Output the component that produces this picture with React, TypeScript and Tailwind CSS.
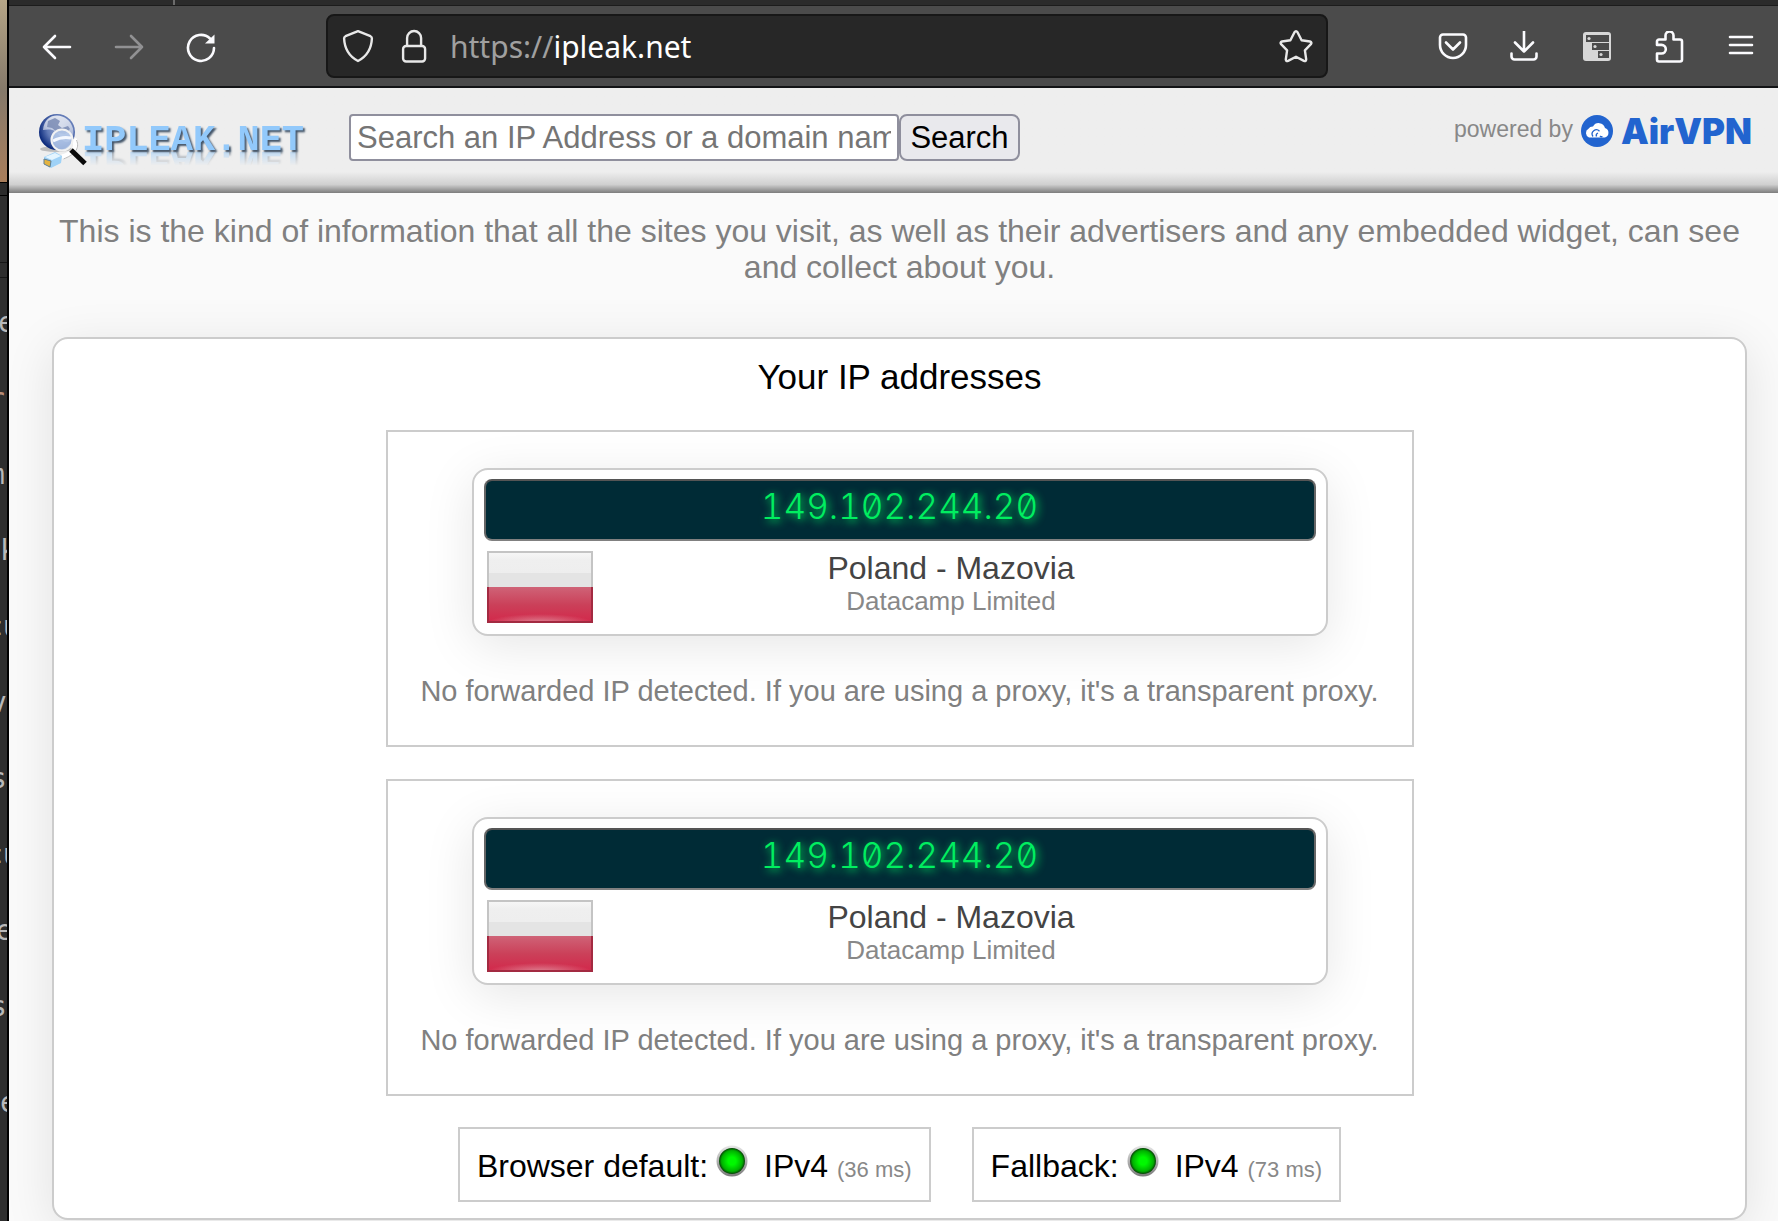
import React from "react";

const GLIMPSES = [
  { text: "e", place: "-ml-0.5" },
  { text: "r", place: "-ml-3 text-[#b98d78]" },
  { text: "m", place: "-ml-3" },
  { text: "k", place: "ml-0" },
  { text: "cu", place: "-ml-3.5" },
  { text: "v", place: "-ml-2.5" },
  { text: "s", place: "-ml-2.5" },
  { text: "cu", place: "-ml-3.5" },
  { text: "e", place: "-ml-1" },
  { text: "s", place: "-ml-2.5" },
  { text: "e", place: "mt-5 ml-0" },
];

function DesktopEdge() {
  return (
    <div className="w-[9px] shrink-0 overflow-hidden border-r-2 border-black bg-[#2e2e2e] font-['DejaVu_Sans_Mono',monospace] text-[28px] leading-[76px] text-[#b9b9b9]">
      <div className="h-[182px] bg-linear-to-b from-[#b5a586] via-[#85796a] to-[#a97e5b]" />
      <div className="h-[14px] border-y border-black bg-[#2b2b2b]" />
      <div className="mt-[66px] h-4 border-y border-[#161616]" />
      <div className="mt-[7px]" aria-hidden="true">
        {GLIMPSES.map((g, i) => (
          <div key={i} className={g.place}>{g.text}</div>
        ))}
      </div>
    </div>
  );
}

const toolIcon = "h-8 w-8 fill-none stroke-[#fbfbfe] stroke-2";

function Toolbar() {
  return (
    <div>
      <div className="flex h-[6px] border-b border-[#1c1c1c] bg-[#2b2b2b]">
        <div className="ml-[164px] w-[2px] bg-[#6b6b6b]" />
      </div>
      <nav className="flex h-[82px] items-center border-b-2 border-[#131416] bg-[#4b4b4b] pr-[21px] pl-8">
        <div className="mt-0.5 flex gap-10">
          <button aria-label="Back">
            <svg viewBox="0 0 32 32" className={toolIcon} strokeLinecap="round" strokeLinejoin="round">
              <path d="M29 16H3M14 5L3 16l11 11" style={{ strokeWidth: 2.6 }} />
            </svg>
          </button>
          <button aria-label="Forward" disabled className="opacity-40">
            <svg viewBox="0 0 32 32" className={toolIcon} strokeLinecap="round" strokeLinejoin="round">
              <path d="M3 16h26M18 5l11 11-11 11" strokeWidth="2.6" />
            </svg>
          </button>
          <button aria-label="Reload">
            <svg viewBox="0 0 32 32" className={toolIcon} strokeLinecap="round">
              <path d="M29 17a13 13 0 1 1-4-9.500" strokeWidth="2.6" />
              <path d="M29.500 3.500v9h-9.500z" className="fill-[#fbfbfe] stroke-none" />
            </svg>
          </button>
        </div>
        <div className="ml-[109px] flex h-16 w-[1002px] min-w-0 items-center rounded-lg border-2 border-[#171717] bg-[#272727] px-[13px]">
          <button aria-label="Tracking protection">
            <svg viewBox="0 0 34 34" className="h-[34px] w-[34px] fill-none stroke-[#e8e8e8]" strokeWidth="2.400" strokeLinejoin="round">
              <path d="M17 2.200L29.500 7.200c1 .5 1.500 1 1.400 2.300C30.500 19 26.500 27 17 32 7.500 27 3.500 19 3.100 9.500 3 8.200 3.500 7.700 4.500 7.200z" />
            </svg>
          </button>
          <button aria-label="Site information" className="ml-[22px]">
            <svg viewBox="0 0 34 34" className="h-[34px] w-[34px] fill-none stroke-[#e8e8e8]" strokeWidth="2.400">
              <rect x="6.100" y="17" width="22" height="15.500" rx="3" />
              <path d="M10.100 17V9a7 7 0 0 1 14 0v8" />
            </svg>
          </button>
          <label className="mt-0.5 ml-[19px] flex grow font-['Noto_Sans',sans-serif] text-[30px] leading-9 text-white">
            <span className="text-[#a0a0a0]">https://</span>
            <input type="text" aria-label="Address" defaultValue="ipleak.net" className="min-w-0 grow bg-transparent outline-none" />
          </label>
          <button aria-label="Bookmark this page">
            <svg viewBox="0 0 34 34" className="h-[34px] w-[34px] fill-none stroke-[#e8e8e8]" strokeWidth="2.400" strokeLinejoin="round">
              <path d="M15.500 3.200q1.500-2.200 3 0l4.100 8 8.400 1.300q2.300.7.900 2.700l-6 6.200 1.300 9q-.2 2.200-2.300 1.500L17 27.800l-7.900 4.100q-2.100.7-2.300-1.500l1.300-9-6-6.200q-1.400-2 .9-2.700l8.400-1.300z" />
            </svg>
          </button>
        </div>
        <div className="mt-0.5 ml-auto flex gap-10">
          <button aria-label="Save to Pocket">
            <svg viewBox="0 0 32 32" className={toolIcon} strokeLinecap="round" strokeLinejoin="round">
              <path strokeWidth="2.6" d="M6 3.500h20a3 3 0 0 1 3 3V14a13 13 0 0 1-26 0V6.500a3 3 0 0 1 3-3zM9 11.500l7 7 7-7" />
            </svg>
          </button>
          <button aria-label="Downloads">
            <svg viewBox="0 0 32 32" className={toolIcon} strokeLinecap="round" strokeLinejoin="round">
              <path strokeWidth="2.6" d="M15 0v20.500M6 11.500l9 9 9-9M2.500 22.500v3a3 3 0 0 0 3 3h19a3 3 0 0 0 3-3v-3" />
            </svg>
          </button>
          <button aria-label="Server list">
            <svg viewBox="0 0 32 32" className="h-8 w-8">
              <rect x="2" y="1" width="28" height="29" rx="3" fill="#d7d7d7" />
              <path d="M5 4h23v7H5zM11 12h17v7H11zM17 20h11v7H17z" fill="#4b4b4b" />
              <circle cx="8" cy="7.500" r="1.600" fill="#d7d7d7" />
              <circle cx="14" cy="15.500" r="1.600" fill="#d7d7d7" />
              <circle cx="20" cy="23.500" r="1.600" fill="#d7d7d7" />
            </svg>
          </button>
          <button aria-label="Extensions">
            <svg viewBox="0 0 32 32" className={toolIcon} strokeLinejoin="round">
              <path strokeWidth="2.6" d="M6 30.500a2 2 0 0 1-2-2v-6h4.500a4.300 4.300 0 0 0 0-8.600H4v-3.400a2 2 0 0 1 2-2h6.500V4.500a4 4 0 0 1 8 0v4H27a2 2 0 0 1 2 2v18a2 2 0 0 1-2 2z" />
            </svg>
          </button>
          <button aria-label="Menu">
            <svg viewBox="0 0 32 32" className={toolIcon} strokeLinecap="round">
              <path strokeWidth="2.6" d="M5 6h22M5 14h22M5 22h22" />
            </svg>
          </button>
        </div>
      </nav>
    </div>
  );
}

function GlobeLogo() {
  return (
    <svg viewBox="0 0 50 56" className="h-[56px] w-[50px] shrink-0" aria-hidden="true">
      <defs>
        <radialGradient id="globe" cx="0.6" cy="0.4" r="0.62">
          <stop offset="0" stopColor="#a3b2d4" />
          <stop offset="0.6" stopColor="#6079b6" />
          <stop offset="1" stopColor="#0c2a7c" />
        </radialGradient>
        <linearGradient id="shine" x1="0" y1="0" x2="0" y2="1">
          <stop offset="0" stopColor="#fff" stopOpacity="0.8" />
          <stop offset="1" stopColor="#fff" stopOpacity="0.3" />
        </linearGradient>
      </defs>
      <ellipse cx="18" cy="36" rx="16" ry="3" fill="#bdbdbd" />
      <circle cx="19" cy="19" r="18" fill="url(#globe)" />
      <path d="M5 17C6 7 12 2.500 19 2.500s14 5 16 13c2 12-6 18-12 10-4-9-10-10-18-8.500z" fill="url(#shine)" />
      <path d="M10 8l7-3 5 3-2 4 4 3 6-2 2 3-5 5-7-1-6-5-5-1z" fill="#7486b0" fillOpacity="0.8" />
      <path d="M36 26c5 9-2 15-12 18" fill="none" stroke="#fff" strokeWidth="5" />
      <path d="M38.500 27c4 9-3 15-13 19" fill="none" stroke="#b9b9b9" strokeWidth="1" />
      <circle cx="24" cy="27" r="10.500" fill="#b4c9ea" fillOpacity="0.85" stroke="#f2f2f2" strokeWidth="2" />
      <path d="M15 28q9-5 18-3" fill="none" stroke="#f4f8ff" strokeWidth="3" />
      <path d="M33 37l14 13.500" stroke="#0a0a0a" strokeWidth="5" />
      <path d="M6 44l11-5 7 4-1 7-10 5-7-4z" fill="#9fd2f7" />
      <path d="M7 44l10-4 6 3-9 4z" fill="#e4f5ff" />
      <path d="M6 46l7 2-1 6-6-3z" fill="#e4b33f" stroke="#5f7f96" strokeWidth="1" />
    </svg>
  );
}

function SiteHeader() {
  return (
    <header className="flex h-[105px] items-start bg-linear-to-b from-[#eeeeee] from-80% via-[#cfcfcf] via-92% to-[#7d7d7d] pr-[26px] pl-[29px]">
      <a href="#" aria-label="IPLEAK.NET" className="mt-[25px] flex w-[311px] shrink-0 items-start">
        <GlobeLogo />
        <span className="-ml-1.5 mt-[9px] font-['Liberation_Mono',monospace] text-[37px] leading-9 font-bold text-[#92c9fb] [-webkit-box-reflect:below_-14px_linear-gradient(transparent_40%,rgba(0,0,0,0.75))] [text-shadow:2px_2px_2px_#44566a]">
          IPLEAK.NET
        </span>
      </a>
      <form className="mt-[26px] flex">
        <input
          type="text"
          aria-label="Search"
          placeholder="Search an IP Address or a domain name"
          className="h-[47px] w-[550px] rounded-[4px] border-2 border-[#8f8f9d] bg-white px-[6px] text-[31px] placeholder:text-[#757575]"
        />
        <button type="button" className="h-[47px] w-[121px] rounded-lg border-2 border-[#8f8f9d] bg-[#e9e9ed] text-[31px] leading-none text-black">
          Search
        </button>
      </form>
      <a href="#" className="mt-[21px] ml-auto flex items-center text-[23px] text-[#888]">
        <span className="mr-2 mb-1">powered by</span>
        <svg viewBox="0 0 32 32" className="h-8 w-8" aria-hidden="true">
          <circle cx="16" cy="16" r="16" fill="#2264cf" />
          <path d="M8 22.500a4.800 4.800 0 0 1-.5-8.700 5 5 0 0 1 4.500-2.300 6.500 6.500 0 0 1 12 1.500 5 5 0 0 1 0 9.500z" fill="#fff" />
          <path d="M12 21.500a4.200 4.200 0 0 1 6.500-5.300M15.500 21.500q-1-2.500 1.500-3.500M19 21q1 1.200 2.500.5" fill="none" stroke="#2264cf" strokeWidth="1.300" />
        </svg>
        <span className="ml-2 font-['Inter',sans-serif] text-[35px] leading-[44px] font-black text-[#2264cf]">AirVPN</span>
      </a>
    </header>
  );
}

function PolandFlag() {
  return (
    <svg viewBox="0 0 106 72" className="h-[72px] w-[106px] shrink-0" role="img" aria-label="Poland">
      <defs>
        <linearGradient id="flagWhite" x1="0" y1="0" x2="0" y2="1">
          <stop offset="0" stopColor="#f8f8f8" />
          <stop offset="0.25" stopColor="#efefef" />
          <stop offset="0.6" stopColor="#eeeeee" />
          <stop offset="0.62" stopColor="#e4e4e4" />
          <stop offset="1" stopColor="#e4e4e4" />
        </linearGradient>
        <linearGradient id="flagRed" x1="0" y1="0" x2="0" y2="1">
          <stop offset="0" stopColor="#cf6377" />
          <stop offset="0.5" stopColor="#cb4059" />
          <stop offset="1" stopColor="#d3274a" />
        </linearGradient>
        <radialGradient id="flagGlow" cx="0.5" cy="1" r="0.5">
          <stop offset="0" stopColor="#e0a0aa" stopOpacity="0.8" />
          <stop offset="1" stopColor="#e0a0aa" stopOpacity="0" />
        </radialGradient>
      </defs>
      <rect width="106" height="36" fill="url(#flagWhite)" />
      <rect y="36" width="106" height="36" fill="url(#flagRed)" />
      <rect y="54" width="106" height="18" fill="url(#flagGlow)" />
      <path d="M1 36V1h104v35" fill="none" stroke="#c4c4c4" strokeWidth="2" />
      <path d="M1 36v35h104V36" fill="none" stroke="#a32a41" strokeWidth="2" />
    </svg>
  );
}

function AddressBox() {
  return (
    <section className="w-[1028px] max-w-full border-2 border-[#ccc] px-[84px] py-9">
      <div className="rounded-2xl border-2 border-[#ccc] bg-white px-[10px] pt-[9px] pb-[11px] shadow-[0_10px_50px_rgba(0,0,0,0.1)]">
        <div className="h-[62px] rounded-lg border-2 border-[#666] border-t-[#555] border-b-[#808080] bg-[#002b36] text-center font-['Inter',sans-serif] text-[35px] leading-[50px] font-light text-[#00ee60] slashed-zero tabular-nums [text-shadow:2px_2px_8px_#00ee60]">
          149.102.244.20
        </div>
        <div className="mt-[10px] flex pr-1.5 pl-[3px]">
          <PolandFlag />
          <div className="grow text-center">
            <div className="text-[32px] leading-[34px] text-[#444]">Poland - Mazovia</div>
            <div className="text-[26px] leading-8 text-[#888]">Datacamp Limited</div>
          </div>
        </div>
      </div>
      <p className="-mx-[60px] mt-[38px] text-center text-[29px] leading-[35px] text-[#808080]">
        No forwarded IP detected. If you are using a proxy, it's a transparent proxy.
      </p>
    </section>
  );
}

function StatusDot() {
  return (
    <svg viewBox="0 0 32 32" className="mx-2 -mt-2.5 h-8 w-8" aria-hidden="true">
      <defs>
        <linearGradient id="rim" x1="0" y1="0" x2="0" y2="1">
          <stop offset="0" stopColor="#e8e8e8" />
          <stop offset="1" stopColor="#7a7a7a" />
        </linearGradient>
        <radialGradient id="led">
          <stop offset="0.3" stopColor="#00f800" />
          <stop offset="0.8" stopColor="#00b000" />
          <stop offset="1" stopColor="#064006" />
        </radialGradient>
      </defs>
      <circle cx="16" cy="16" r="15.500" fill="url(#rim)" />
      <circle cx="16" cy="16" r="13" fill="url(#led)" />
    </svg>
  );
}

function Protocol({ label, time }: { label: string; time: string }) {
  return (
    <div className="flex h-[75px] items-center border-2 border-[#ccc] px-[17px] pt-0.5 text-[32px] text-black">
      <span>{label}</span>
      <StatusDot />
      <span className="ml-2">
        IPv4 <small className="text-[22px] text-[#888]">{time}</small>
      </span>
    </div>
  );
}

export default function App() {
  return (
    <div className="flex h-screen overflow-hidden font-['Liberation_Sans',Arial,sans-serif]">
      <DesktopEdge />
      <div className="flex min-w-0 grow flex-col bg-[#fafafa]">
        <Toolbar />
        <SiteHeader />
        <main className="pr-[31px] pl-[43px]">
          <p className="pt-5 text-center text-[32px] leading-9 text-[#808080]">
            This is the kind of information that all the sites you visit, as well as their advertisers and any embedded widget, can see and collect about you.
          </p>
          <div className="mt-[52px] flex flex-col items-center rounded-2xl border-2 border-[#ccc] bg-white pb-4 shadow-[0_10px_50px_rgba(0,0,0,0.1)]">
            <h1 className="mt-[17px] mb-8 text-[35px] leading-[42px] text-black">Your IP addresses</h1>
            <div className="flex max-w-full flex-col gap-8">
              <AddressBox />
              <AddressBox />
            </div>
            <div className="mt-[31px] flex gap-[41px]">
              <Protocol label="Browser default:" time="(36 ms)" />
              <Protocol label="Fallback:" time="(73 ms)" />
            </div>
          </div>
        </main>
      </div>
    </div>
  );
}
